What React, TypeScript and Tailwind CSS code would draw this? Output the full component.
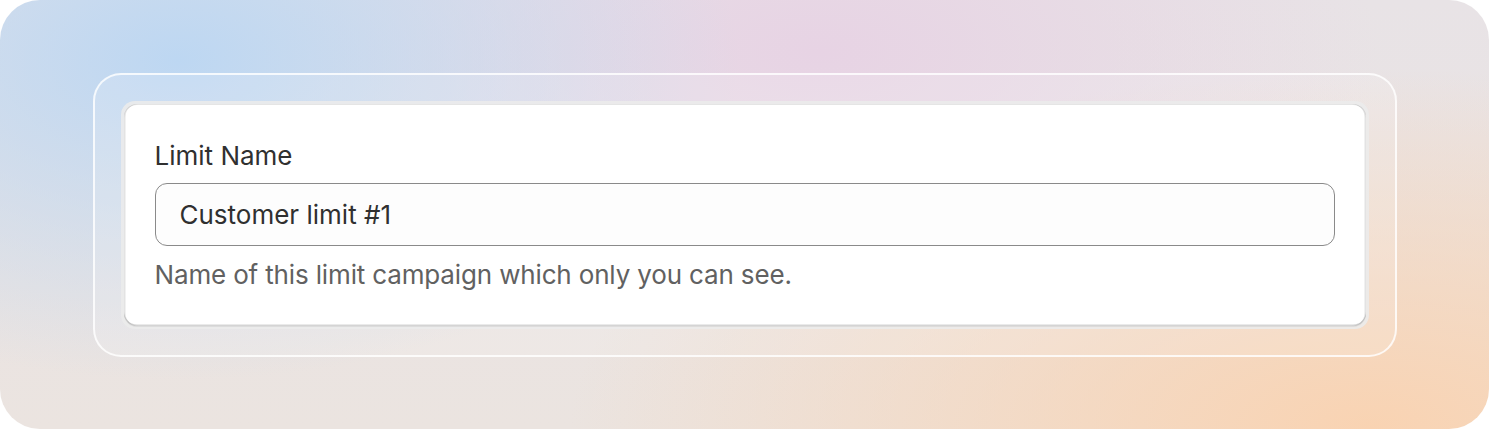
export default function App() {
  return (
    <div className="w-[1489px] h-[429px] bg-white">
      <div
        className="w-full h-full rounded-[40px] flex items-center justify-center bg-[radial-gradient(ellipse_560px_320px_at_12%_14%,#bdd7f2_0%,rgba(189,215,242,0)_100%),radial-gradient(ellipse_560px_260px_at_55%_12%,#e7d3e4_0%,rgba(231,211,228,0)_100%),radial-gradient(ellipse_800px_360px_at_92%_100%,#f9d3b2_0%,rgba(249,211,178,0)_100%),linear-gradient(180deg,#e8e3e6_0%,#ebe4e0_100%)]"
        style={{ fontFamily: 'Inter, "Noto Sans", sans-serif' }}
      >
        {/* Frame */}
        <div className="w-[1304px] rounded-[28px] border-2 border-white/80 bg-white/15 p-[26px]">
          <div className="rounded-[14px] bg-[#ebebeb]/90 p-[3px]">
            {/* Card */}
            <div className="rounded-[13px] bg-white px-[31px] pt-[36px] pb-[35px] shadow-[0_1px_0_0_rgba(26,26,26,0.07),inset_0_-1.5px_0_0_rgba(0,0,0,0.17),inset_1.5px_0_0_0_rgba(0,0,0,0.11),inset_-1.5px_0_0_0_rgba(0,0,0,0.11),inset_0_1px_0_0_rgba(204,204,204,0.5)]">
              <div className="text-[26px] leading-[32px] text-[#303030]">Limit Name</div>
              <div className="mt-[11px] h-[63px] rounded-[12px] border border-[#8a8a8a] bg-[#fdfdfd] flex items-center px-[24px]">
                <span className="text-[26px] text-[#303030]">Customer limit #1</span>
              </div>
              <div className="mt-[13px] text-[26px] leading-[32px] tracking-[-0.15px] text-[#616161]">
                Name of this limit campaign which only you can see.
              </div>
            </div>
          </div>
        </div>
      </div>
    </div>
  );
}
